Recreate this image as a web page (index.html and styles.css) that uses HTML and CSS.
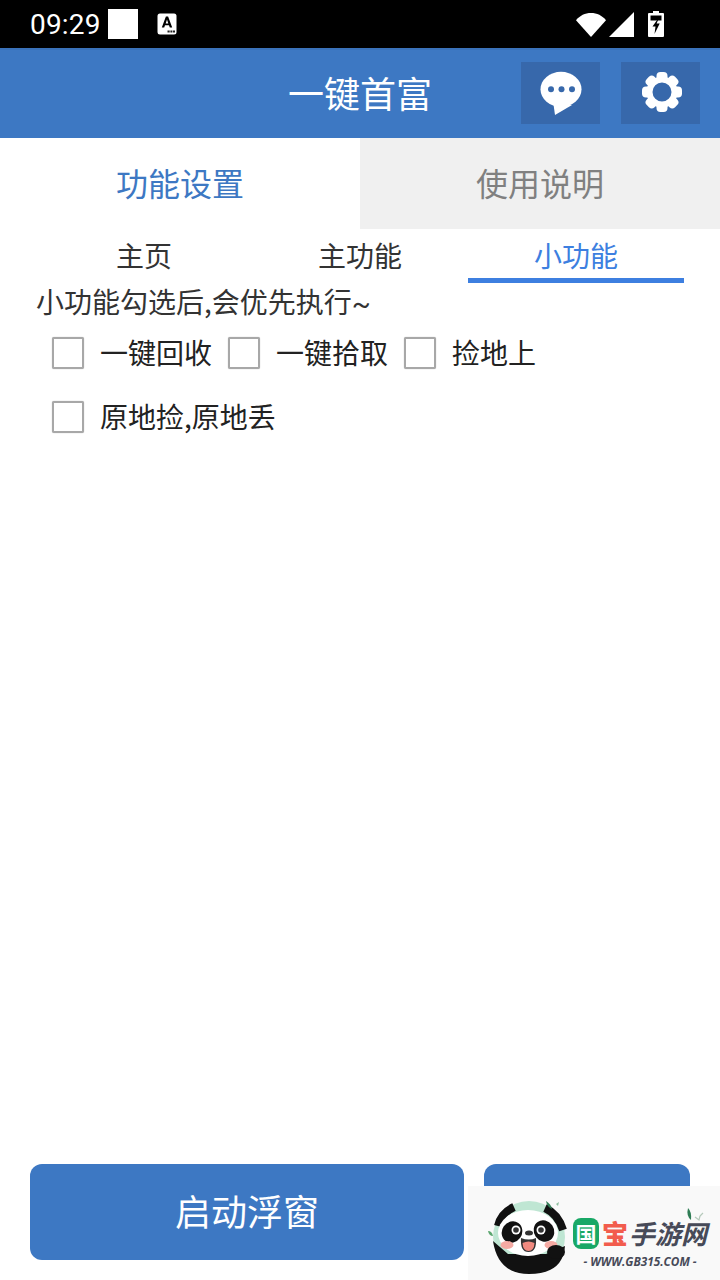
FILE: index.html
```html
<!DOCTYPE html>
<html lang="zh">
<head>
<meta charset="utf-8">
<title>一键首富</title>
<link rel="stylesheet" href="styles.css">
</head>
<body>
<div class="app">
  <div class="status">
    <div class="status-left">
      <span class="time">09:29</span>
      <span class="white-box"></span>
      <svg class="a-icon" width="20" height="22" viewBox="0 0 20 22"><rect x="0.5" y="0.5" width="19" height="21" rx="2.5" fill="#fff"/><path d="M4.8 14.6 8.9 3.6h2.2l4.1 11h-2.4l-.8-2.3H8l-.8 2.3zM8.7 10.4h2.6L10 6.6z" fill="#000"/><path d="M10.5 17.5h2.2v2h-2.2zM13.4 17.5h2v2h-2zM16 17.5h2v2h-2z" fill="#222"/></svg>
    </div>
    <div class="status-right">
      <svg width="30" height="25" viewBox="0 0 30 25"><path d="M0 8.2C3.8 3.6 9 1 15 1s11.200 2.600 15 7.200L15 25z" fill="#fff"/></svg>
      <svg width="25" height="25" viewBox="0 0 25 25"><path d="M25 0v25H0z" fill="#fff"/></svg>
      <svg class="batt" width="16" height="26" viewBox="0 0 16 26"><path d="M5 0h6v2h4a1 1 0 0 1 1 1v22a1 1 0 0 1-1 1H1a1 1 0 0 1-1-1V3a1 1 0 0 1 1-1h4z" fill="#fff"/><path d="M2.500 4.500h11V9.500H2.500z" fill="#000"/><path d="M9.800 8 4.500 15.500h3l-1 7.500 5.200-10.500H8.600L10.500 8z" fill="#000"/></svg>
    </div>
  </div>
  <header class="bar">
    <h1 class="title">一键首富</h1>
    <div class="bar-actions">
      <button class="icon-btn" type="button"><svg width="42" height="44" viewBox="0 0 42 44"><ellipse cx="21" cy="18.300" rx="20.500" ry="17.500" fill="#fff"/><path d="M13 30 15 44 32 34z" fill="#fff"/><circle cx="11" cy="18.300" r="3" fill="#3768ab"/><circle cx="21.500" cy="18.300" r="3" fill="#3768ab"/><circle cx="32" cy="18.300" r="3" fill="#3768ab"/></svg></button>
      <button class="icon-btn icon-btn-gear" type="button"><svg width="42" height="42" viewBox="0 0 42 42"><circle cx="21" cy="21" r="12.500" fill="none" stroke="#fff" stroke-width="6"/><g fill="#fff"><rect x="15.500" y="1" width="11" height="10" rx="4"/><rect x="15.500" y="1" width="11" height="10" rx="4" transform="rotate(45 21 21)"/><rect x="15.500" y="1" width="11" height="10" rx="4" transform="rotate(90 21 21)"/><rect x="15.500" y="1" width="11" height="10" rx="4" transform="rotate(135 21 21)"/><rect x="15.500" y="1" width="11" height="10" rx="4" transform="rotate(180 21 21)"/><rect x="15.500" y="1" width="11" height="10" rx="4" transform="rotate(225 21 21)"/><rect x="15.500" y="1" width="11" height="10" rx="4" transform="rotate(270 21 21)"/><rect x="15.500" y="1" width="11" height="10" rx="4" transform="rotate(315 21 21)"/></g></svg></button>
    </div>
  </header>
  <nav class="tabs">
    <div class="tab tab-active">功能设置</div>
    <div class="tab tab-idle">使用说明</div>
  </nav>
  <nav class="subtabs">
    <div class="subtab">主页</div>
    <div class="subtab">主功能</div>
    <div class="subtab subtab-active">小功能</div>
  </nav>
  <main class="content">
    <p class="hint">小功能勾选后,会优先执行<span class="tilde">~</span></p>
    <div class="checks">
      <label class="check"><span class="box"></span>一键回收</label>
      <label class="check"><span class="box"></span>一键拾取</label>
      <label class="check"><span class="box"></span>捡地上</label>
      <label class="check"><span class="box"></span>原地捡,原地丢</label>
    </div>
  </main>
  <footer class="actions">
    <button class="btn btn-main" type="button">启动浮窗</button>
    <button class="btn btn-side" type="button"></button>
  </footer>
  <div class="watermark">
    <svg class="panda" width="88" height="82" viewBox="0 0 88 82">
      <circle cx="45" cy="41" r="36" fill="#bfe6d3"/>
      <path d="M9 45 24 58H62L81 50Q79 78 45 78Q14 78 9 45z" fill="#111"/>
      <path d="M14 30Q17 17 30 11" fill="none" stroke="#111" stroke-width="8"/>
      <path d="M61 12Q74 18 79 34" fill="none" stroke="#111" stroke-width="8"/>
      <ellipse cx="44" cy="37" rx="30" ry="23" fill="#fff"/>
      <ellipse cx="28" cy="36" rx="10" ry="11" fill="#111" transform="rotate(35 28 36)"/>
      <ellipse cx="60" cy="35" rx="10" ry="11" fill="#111" transform="rotate(-35 60 35)"/>
      <circle cx="32" cy="34" r="4.500" fill="#fff"/>
      <circle cx="57" cy="34" r="4.500" fill="#fff"/>
      <circle cx="32" cy="34" r="2.800" fill="#333"/>
      <circle cx="57" cy="34" r="2.800" fill="#333"/>
      <ellipse cx="45" cy="37" rx="4" ry="2.500" fill="#333"/>
      <path d="M37 42q8 3 15 0q1 14-7.500 14T37 42z" fill="#333"/>
      <path d="M38.500 47q6-3 12 0q-.5 8-6 8T38.500 47z" fill="#f08a80"/>
      <ellipse cx="23" cy="49" rx="6.500" ry="4" fill="#f5aaa3"/>
      <ellipse cx="67" cy="49" rx="6.500" ry="4" fill="#f5aaa3"/>
      <ellipse cx="72" cy="56" rx="9" ry="7" fill="#111"/>
      <path d="M4 35q4 0 5 5q-4 0-5-5z" fill="#5aa66f"/>
      <path d="M62 5q5 3 6 8q-5-2-6-8z" fill="#2f7d55"/>
      <path d="M72 8l3-2-1 4z" fill="#8fbfa0"/>
    </svg>
    <div class="brand">
      <div class="brand-name"><span class="b-guo">国</span><span class="b-bao">宝</span><span class="b-rest">手游网</span></div>
      <div class="brand-url">- WWW.GB315.COM -</div>
    </div>
    <svg class="leaf" width="20" height="14" viewBox="0 0 20 14"><path d="M3 0q4 4 3 12Q1 8 3 0z" fill="#2f7d55"/><path d="M10 9l4 3 1-4M15 8l3-3" fill="none" stroke="#b5c9bb" stroke-width="1.200"/></svg>
  </div>
</div>
</body>
</html>
```
FILE: styles.css
```css
* { box-sizing: border-box; }
html, body { margin: 0; padding: 0; }
body { font-family: "Noto Sans CJK SC", sans-serif; background: #fff; color: #333; }
.app { position: relative; width: 720px; height: 1280px; overflow: hidden; display: flex; flex-direction: column; background: #fff; }

.status { height: 48px; background: #000; display: flex; justify-content: space-between; align-items: center; color: #fff; flex: none; }
.status-left { display: flex; align-items: center; padding-left: 30px; }
.time { font-family: Roboto, sans-serif; font-size: 28px; width: 78px; letter-spacing: 0.2px; }
.white-box { width: 30px; height: 30px; background: #fff; }
.a-icon { margin-left: 19px; }
.status-right { display: flex; align-items: center; padding-right: 56px; gap: 3px; }
.status-right .batt { margin-left: 11px; }

.bar { height: 90px; flex: none; background: #3d78c3; border-top: 2px solid #3a72ba; display: flex; align-items: center; justify-content: center; position: relative; padding-bottom: 4px; }
.title { margin: 0; font-size: 36px; font-weight: 400; color: #fff; }
.bar-actions { position: absolute; right: 20px; top: 12px; display: flex; gap: 21px; }
.icon-btn { width: 79px; height: 62px; border: 0; padding: 0; background: #3768ab; display: flex; align-items: center; justify-content: center; }
.icon-btn-gear { padding: 0 0 2px 3px; }

.tabs { display: flex; height: 91px; flex: none; }
.tab { flex: 1; display: flex; align-items: center; justify-content: center; font-size: 32px; padding-bottom: 4px; }
.tab-active { color: #3d78c3; background: #fff; }
.tab-idle { color: #808080; background: #f0f0f0; }

.subtabs { display: flex; padding: 0 36px; height: 54px; flex: none; }
.subtab { flex: 1; display: flex; align-items: center; justify-content: center; font-size: 28px; color: #333; padding-bottom: 2px; }
.subtab-active { color: #3d7fe0; box-shadow: inset 0 -5px 0 #3d7fe0; }

.content { flex: 1; padding: 0 36px; }
.hint { margin: 0; height: 36px; font-size: 28px; line-height: 36px; color: #333; }
.tilde { font-family: Roboto, sans-serif; }
.checks { display: flex; flex-wrap: wrap; padding: 2px 0 0 16px; }
.check { width: 176px; height: 64px; display: flex; align-items: center; font-size: 28px; color: #222; white-space: nowrap; padding-bottom: 2px; }
.box { width: 32px; height: 32px; margin-top: 2px; border: 2px solid #a8a8a8; border-radius: 2px; margin-right: 16px; flex: none; background: #fff; box-shadow: 0 0 1px rgba(0,0,0,.35); }

.actions { flex: none; display: flex; gap: 20px; padding: 0 30px 20px; }
.btn { border: 0; height: 96px; border-radius: 12px; background: #3d78c3; color: #fff; font-family: inherit; font-size: 36px; padding: 0 0 4px; }
.btn-main { width: 434px; }
.btn-side { width: 206px; }

.watermark { position: absolute; left: 468px; top: 1186px; width: 252px; height: 94px; background: #f9f9f9; display: flex; align-items: flex-start; padding: 10px 0 0 16px; }
.panda { flex: none; }
.brand { margin-top: 21px; display: flex; flex-direction: column; align-items: center; width: 136px; }
.brand-name { display: flex; align-items: center; height: 32px; font-weight: 700; white-space: nowrap; }
.b-guo { width: 26px; height: 31px; line-height: 30px; text-align: center; background: #18a866; color: #fff; border-radius: 8px; font-size: 21px; }
.b-bao { color: #f25c4d; font-size: 26px; line-height: 32px; margin: 0 1px 0 3px; font-weight: 900; }
.b-rest { color: #474a58; font-size: 26px; line-height: 32px; font-style: italic; }
.brand-url { margin-top: 5px; font-family: "Open Sans", sans-serif; font-style: italic; font-weight: 700; font-size: 11.8px; line-height: 14px; color: #474a58; white-space: nowrap; }
.leaf { position: absolute; left: 217px; top: 22px; }
```
